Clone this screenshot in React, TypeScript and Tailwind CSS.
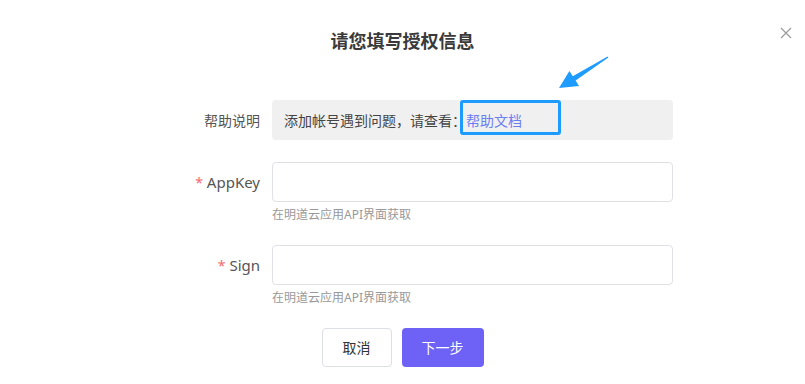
import React from "react";

function CloseIcon() {
  return (
    <svg width="12" height="12" viewBox="0 0 12 12" className="block">
      <path d="M1 1L11 11M11 1L1 11" stroke="#9a9a9a" strokeWidth="1.2" fill="none" />
    </svg>
  );
}

function Arrow() {
  return (
    <svg width="65" height="45" viewBox="0 0 65 45" className="block">
      <polygon
        points="58.4,7.6 25.6,30.6 29,36 9,38 19.4,21 22.8,26.2 57.6,6.4"
        fill="#1e9bff"
      />
    </svg>
  );
}

export default function App() {
  const font = { fontFamily: '"Noto Sans", "Noto Sans CJK SC", sans-serif' };
  return (
    <div className="relative w-[805px] h-[384px] bg-white overflow-hidden" style={font}>
      <div className="absolute left-[780px] top-[27px]">
        <CloseIcon />
      </div>
      <div className="absolute left-[550px] top-[50px]">
        <Arrow />
      </div>

      <div className="pt-[27px] flex justify-center">
        <h1 className="text-[18px] leading-[28px] font-bold text-[#3a3a3a]">请您填写授权信息</h1>
      </div>

      <div className="mt-[45px] flex flex-col ml-[132px] w-[541px]">
        {/* help row */}
        <div className="flex items-center gap-[12px]">
          <div className="w-[128px] text-right text-[14px] text-[#555]">帮助说明</div>
          <div className="relative flex-1 h-[40px] bg-[#f0f0f0] rounded-[4px] flex items-center pl-[12px] text-[14px] text-[#444]">
            <span>添加帐号遇到问题，请查看：</span>
            <span className="text-[#6c7ff0]">帮助文档</span>
            <div className="absolute left-[188px] top-0 w-[101px] h-[35px] border-[3px] border-[#1e9bff] rounded-[3px]" />
          </div>
        </div>

        {/* AppKey */}
        <div className="mt-[22px] flex gap-[12px]">
          <div className="w-[128px] h-[40px] flex items-center justify-end text-[15px] text-[#555]">
            <span className="text-[#f56c6c] mr-[4px] text-[14px]">*</span>AppKey
          </div>
          <div className="flex-1 flex flex-col">
            <div className="h-[40px] border border-[#e0e0e6] rounded-[4px] bg-white" />
            <div className="mt-[3px] text-[12px] leading-[20px] text-[#999]">在明道云应用API界面获取</div>
          </div>
        </div>

        {/* Sign */}
        <div className="mt-[20px] flex gap-[12px]">
          <div className="w-[128px] h-[40px] flex items-center justify-end text-[15px] text-[#555]">
            <span className="text-[#f56c6c] mr-[4px] text-[14px]">*</span>Sign
          </div>
          <div className="flex-1 flex flex-col">
            <div className="h-[40px] border border-[#e0e0e6] rounded-[4px] bg-white" />
            <div className="mt-[3px] text-[12px] leading-[20px] text-[#999]">在明道云应用API界面获取</div>
          </div>
        </div>
      </div>

      <div className="mt-[20px] flex justify-center gap-[10px]">
        <button className="w-[70px] h-[39px] border border-[#dcdfe6] rounded-[4px] bg-white text-[14px] text-[#333]">
          取消
        </button>
        <button className="w-[82px] h-[39px] rounded-[4px] bg-[#6e62f6] text-[14px] text-white">
          下一步
        </button>
      </div>
    </div>
  );
}
